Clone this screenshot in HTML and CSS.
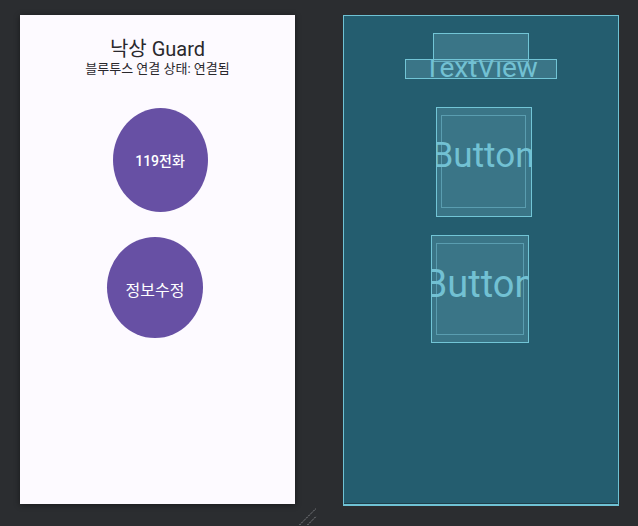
FILE: index.html
```html
<!DOCTYPE html>
<html lang="ko">
<head>
<meta charset="utf-8">
<title>Layout preview</title>
<link rel="stylesheet" href="styles.css">
</head>
<body>
<div class="canvas">
  <div class="screen design">
    <div class="title">낙상 Guard</div>
    <div class="subtitle">블루투스 연결 상태: 연결됨</div>
    <div class="btn btn-a"><div class="circle label-a">119전화</div></div>
    <div class="btn btn-b"><div class="circle label-b">정보수정</div></div>
  </div>
  <div class="screen blueprint">
    <div class="title bp-box"></div>
    <div class="subtitle bp-box bp-text">TextView</div>
    <div class="btn btn-a bp-box bp-btn"><div class="bp-inner">Button</div></div>
    <div class="btn btn-b bp-box bp-btn"><div class="bp-inner">Button</div></div>
  </div>
</div>
<svg class="handle" width="20" height="20" viewBox="0 0 20 20">
  <line x1="0.5" y1="18" x2="17" y2="1.5" stroke="#8d8f93" stroke-width="1" stroke-dasharray="1.5 1"/>
  <line x1="8.5" y1="18" x2="17" y2="9.5" stroke="#8d8f93" stroke-width="1" stroke-dasharray="1.5 1"/>
</svg>
</body>
</html>
```
FILE: styles.css
```css
html, body {
  margin: 0;
  padding: 0;
}
body {
  width: 638px;
  height: 526px;
  overflow: hidden;
  background: #2b2d30;
  font-family: Roboto, "Noto Sans CJK KR", sans-serif;
  position: relative;
}
.canvas {
  display: flex;
  align-items: flex-start;
  gap: 48px;
  padding: 15px 0 0 20px;
}
.screen {
  box-sizing: border-box;
  width: 275px;
  height: 489px;
  display: flex;
  flex-direction: column;
  align-items: center;
  padding-top: 18px;
}
.design {
  background: #fdfaff;
  box-shadow: 0 1px 6px rgba(0, 0, 0, 0.45);
}
.blueprint {
  width: 276px;
  height: 491px;
  background: #245d6f;
  border: 1px solid #6fc2d4;
  border-bottom: 2px solid #6fc2d4;
  box-shadow: inset 0 -1px 0 #1e3d48;
  padding-top: 17px;
}
.title {
  box-sizing: border-box;
  width: 96px;
  height: 29px;
  margin-bottom: -3px;
  font-size: 20px;
  line-height: 32px;
  text-align: center;
  color: #2a282d;
  white-space: nowrap;
}
.subtitle {
  box-sizing: border-box;
  width: 152px;
  height: 20px;
  font-size: 13px;
  line-height: 20px;
  text-align: center;
  color: #2a282d;
  white-space: nowrap;
  position: relative;
}
.btn {
  box-sizing: border-box;
  display: flex;
  justify-content: center;
}
.btn-a {
  width: 96px;
  height: 110px;
  margin-top: 28px;
  margin-left: 5px;
}
.btn-b {
  width: 98px;
  height: 108px;
  margin-top: 18px;
  margin-right: 3px;
}
.circle {
  background: #6750a4;
  color: #ffffff;
  border-radius: 50%;
  display: flex;
  align-items: center;
  justify-content: center;
  white-space: nowrap;
}
.label-a {
  width: 95px;
  height: 104px;
  margin-top: 1px;
  font-size: 14px;
  font-weight: 500;
}
.label-b {
  width: 96px;
  height: 101px;
  margin-top: 2px;
  margin-right: 2px;
  font-size: 16px;
  padding-top: 3px;
  box-sizing: border-box;
}
.bp-box {
  background: rgba(90, 150, 170, 0.42);
  border: 1px solid #72c5d6;
}
.bp-text {
  color: #72c1d3;
  font-size: 28px;
  line-height: 15px;
  overflow: hidden;
  display: flex;
  justify-content: center;
}
.bp-btn {
  overflow: hidden;
  padding: 7px 5px 8px 4px;
}
.btn-b.bp-btn {
  padding: 7px 4px 7px 4px;
}
.bp-inner {
  flex: 1 1 0;
  min-width: 0;
  border: 1px solid #5a9db0;
  display: flex;
  align-items: center;
  justify-content: center;
  padding-bottom: 12px;
  color: #72c1d3;
  font-size: 35px;
  white-space: nowrap;
}
.btn-b .bp-inner {
  font-size: 38px;
  padding-bottom: 10px;
}
.handle {
  position: absolute;
  left: 299px;
  top: 507px;
}
```
